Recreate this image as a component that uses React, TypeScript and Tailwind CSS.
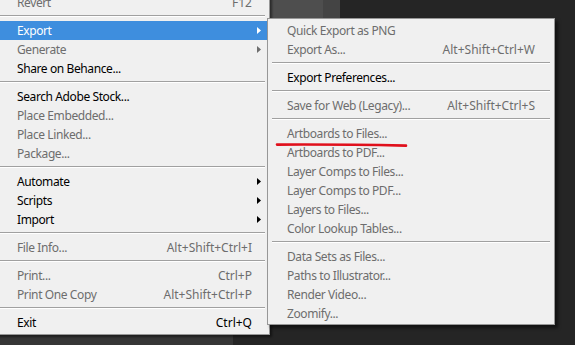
import React from "react";

type Row =
  | { label: string; shortcut?: string; disabled?: boolean; arrow?: boolean; active?: boolean }
  | "sep";

const FILE_MENU: Row[] = [
  { label: "Revert", shortcut: "F12", disabled: true },
  "sep",
  { label: "Export", arrow: true, active: true },
  { label: "Generate", arrow: true, disabled: true },
  { label: "Share on Behance..." },
  "sep",
  { label: "Search Adobe Stock..." },
  { label: "Place Embedded...", disabled: true },
  { label: "Place Linked...", disabled: true },
  { label: "Package...", disabled: true },
  "sep",
  { label: "Automate", arrow: true },
  { label: "Scripts", arrow: true },
  { label: "Import", arrow: true },
  "sep",
  { label: "File Info...", shortcut: "Alt+Shift+Ctrl+I", disabled: true },
  "sep",
  { label: "Print...", shortcut: "Ctrl+P", disabled: true },
  { label: "Print One Copy", shortcut: "Alt+Shift+Ctrl+P", disabled: true },
  "sep",
  { label: "Exit", shortcut: "Ctrl+Q" },
];

const EXPORT_MENU: Row[] = [
  { label: "Quick Export as PNG", disabled: true },
  { label: "Export As...", shortcut: "Alt+Shift+Ctrl+W", disabled: true },
  "sep",
  { label: "Export Preferences..." },
  "sep",
  { label: "Save for Web (Legacy)...", shortcut: "Alt+Shift+Ctrl+S", disabled: true },
  "sep",
  { label: "Artboards to Files...", disabled: true },
  { label: "Artboards to PDF...", disabled: true },
  { label: "Layer Comps to Files...", disabled: true },
  { label: "Layer Comps to PDF...", disabled: true },
  { label: "Layers to Files...", disabled: true },
  { label: "Color Lookup Tables...", disabled: true },
  "sep",
  { label: "Data Sets as Files...", disabled: true },
  { label: "Paths to Illustrator...", disabled: true },
  { label: "Render Video...", disabled: true },
  { label: "Zoomify...", disabled: true },
];

const Arrow = ({ color }: { color: string }) => (
  <svg width="4" height="7" viewBox="0 0 4 7" className="block">
    <polygon points="0,0 4,3.5 0,7" fill={color} />
  </svg>
);

const MenuRows = ({ rows, pad, gutter }: { rows: Row[]; pad: string; gutter: string }) => (
  <>
    {rows.map((r, i) =>
      r === "sep" ? (
        <div key={i} className="h-[9px] px-[4px] pt-[3px]">
          <div className="h-[2px] border-t border-[#a0a0a0] border-b border-b-white" />
        </div>
      ) : (
        <div
          key={i}
          className={`flex items-center h-[19px] ${pad} ${
            r.active ? "bg-[#3e8ede] text-white" : r.disabled ? "text-[#6d6d6d]" : "text-black"
          }`}
        >
          <span className="flex-1 whitespace-nowrap tracking-[-0.4px]">{r.label}</span>
          {r.shortcut && <span className="whitespace-nowrap">{r.shortcut}</span>}
          <span className={`${gutter} flex justify-start pl-[5px]`}>
            {r.arrow && <Arrow color={r.active ? "#ffffff" : r.disabled ? "#6d6d6d" : "#000000"} />}
          </span>
        </div>
      )
    )}
  </>
);

export default function App() {
  return (
    <div
      className="relative flex items-start w-[575px] h-[345px] overflow-hidden bg-[#252525] text-[12px] leading-[19px]"
      style={{ fontFamily: '"Noto Sans", "Open Sans", sans-serif' }}
    >
      {/* canvas bits behind the menus */}
      <div className="absolute left-[270px] top-0 w-[53px] h-[20px] bg-[#4e4e4e]" />
      <div className="absolute left-[323px] top-0 w-[17px] h-[20px] bg-[#444444]" />
      <div className="absolute left-0 top-[330px] w-[233px] h-[15px] bg-[#363636]" />

      {/* File menu */}
      <div className="relative -ml-[4px] -mt-[7px] w-[274px] shrink-0 bg-[#f0f0f0] border-r border-b border-[#979797] pb-[2px] shadow-[2px_2px_2px_rgba(0,0,0,0.45)]">
        <MenuRows rows={FILE_MENU} pad="pl-[21px]" gutter="w-[17px]" />
      </div>

      {/* Export submenu */}
      <div className="absolute left-[267px] top-[18px] w-[288px] bg-[#f0f0f0] border border-[#979797] pt-[2px] pb-[1px] shadow-[3px_3px_3px_rgba(0,0,0,0.5)]">
        <MenuRows rows={EXPORT_MENU} pad="pl-[19px]" gutter="w-[19px]" />
      </div>

      {/* red annotation underline */}
      <svg className="absolute left-[275px] top-[141px]" width="134" height="8" viewBox="0 0 134 8">
        <path d="M2 3.6 Q 60 3.2 131 4.6" stroke="#e0101c" strokeWidth="2.6" fill="none" strokeLinecap="round" />
      </svg>
    </div>
  );
}
